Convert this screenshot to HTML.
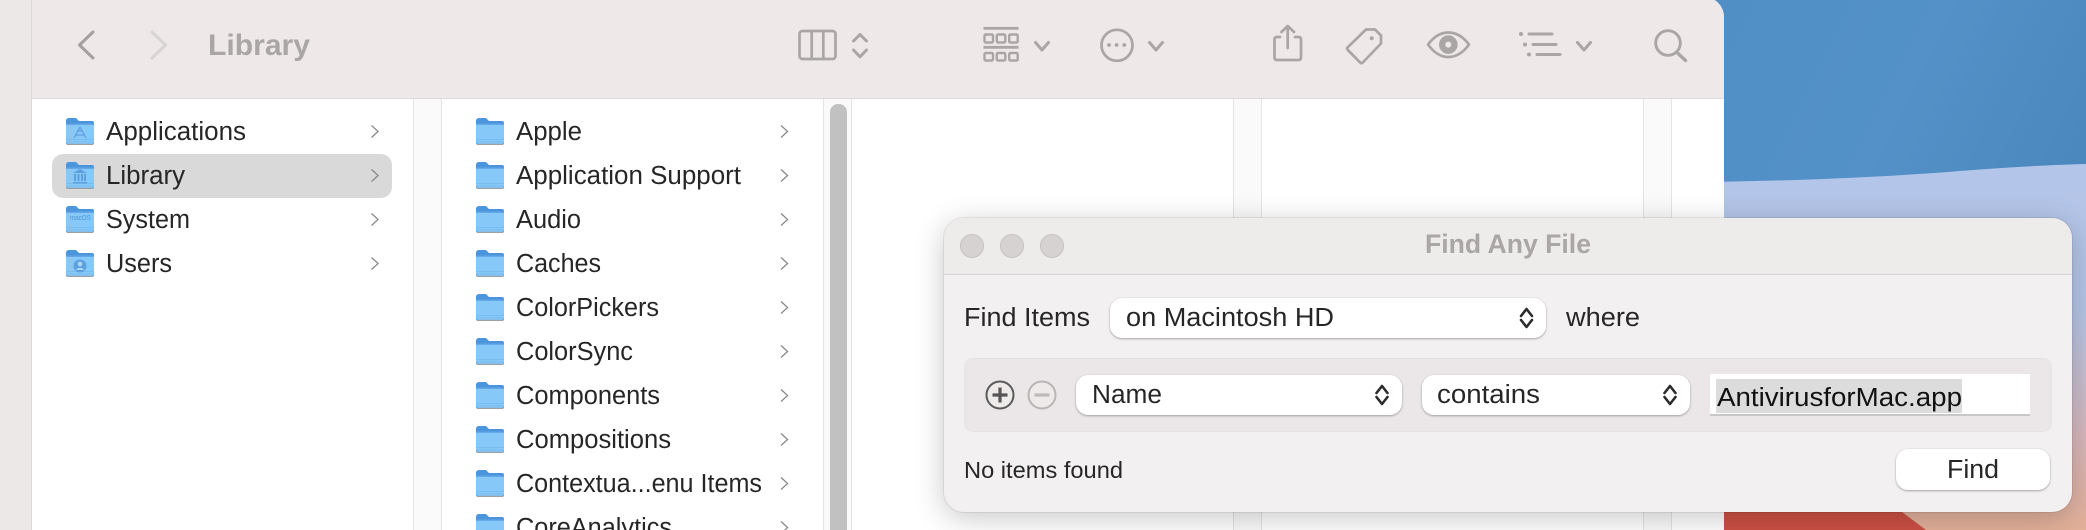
<!DOCTYPE html>
<html><head><meta charset="utf-8"><title>Find Any File</title>
<style>
html,body{margin:0;padding:0;width:2086px;height:530px;overflow:hidden;background:#ede8e8}
body{position:relative;font-family:"Liberation Sans",sans-serif}
.a{position:absolute}
#win{left:32px;top:-3px;width:1692px;height:533px;background:#fff;border-radius:0 20px 0 0;overflow:hidden;box-shadow:-1px 0 0 #dcd8d8}
#tb{left:0;top:0;width:1692px;height:101px;background:#eee8e8;border-bottom:1px solid #dedada}
.st{height:431px;background:#fafafa;border-left:1.5px solid #e4e4e4;border-right:1.5px solid #e4e4e4;box-sizing:border-box;width:29px}
#sel{left:52px;top:154px;width:340px;height:44px;background:#d9d9d9;border-radius:11px}
#thumb{left:830px;top:104px;width:17px;height:426px;background:#c1c1c1;border-radius:8px 8px 0 0}
#dlg{left:944px;top:218px;width:1128px;height:294px;background:#f3f0f1;border-radius:20px;box-shadow:0 6px 30px rgba(0,0,0,.22),0 0 0 1px rgba(0,0,0,.07)}
#dt{left:0;top:0;width:1128px;height:56px;background:#eeebeb;border-bottom:1.5px solid #d6d3d3;border-radius:20px 20px 0 0}
.tl{top:16px;width:24px;height:24px;border-radius:50%;background:#d6d2d1;box-sizing:border-box;border:1px solid #c6c2c1}
#row{left:20px;top:140px;width:1088px;height:74px;background:#ebe7e8;border:1px solid #e6e3e3;border-radius:9px;box-sizing:border-box}
.p{background:#fff;border-radius:12px;box-shadow:0 1px 2px rgba(0,0,0,.3),0 0 1px rgba(0,0,0,.15)}
#fld{left:766px;top:156px;width:320px;height:42px;background:#fff;border-bottom:2px solid #c8c8c8;box-sizing:border-box}
#hl{left:772px;top:161px;width:246px;height:34px;background:#dcdcdc}
svg{position:absolute;left:0;top:0}
text{fill:#262626;font-family:"Liberation Sans",sans-serif;font-size:25.5px}
.b{font-weight:700;fill:#aaa6a6}
.ti{fill:none;stroke:#aba6a6;stroke-width:2.7;stroke-linecap:round;stroke-linejoin:round}
.ch{fill:none;stroke:#858585;stroke-width:1.2}
.sp{fill:none;stroke:#2c2c2c;stroke-width:2.6;stroke-linecap:round;stroke-linejoin:round}
.g{fill:none;stroke:#5da0de;stroke-width:1.3}
</style></head><body>

<svg class="a" width="2086" height="530" viewBox="0 0 2086 530" style="left:0;top:0">
<defs>
<linearGradient id="lo" x1="0" y1="165" x2="0" y2="530" gradientUnits="userSpaceOnUse"><stop offset="0" stop-color="#b3c5e9"/><stop offset=".4" stop-color="#b5c5e6"/><stop offset=".75" stop-color="#d8b8bc"/><stop offset="1" stop-color="#e3b098"/></linearGradient>
<linearGradient id="bl" x1="1724" y1="0" x2="2086" y2="180" gradientUnits="userSpaceOnUse"><stop offset="0" stop-color="#4f8fc6"/><stop offset=".5" stop-color="#5391c8"/><stop offset="1" stop-color="#4a87bc"/></linearGradient>
</defs>
<rect x="1700" y="0" width="386" height="530" fill="url(#bl)"/>
<path d="M1700 182C1800 181 1900 176 1960 171C2010 167 2050 165 2086 164V530H1700Z" fill="url(#lo)"/>
<path d="M1700 420L1830 450L1902 512L1926 530H1700Z" fill="#cc5044"/>
</svg>

<div class="a" id="win">
<div class="a" id="tb"></div>
</div>
<div class="a st" style="left:413px;top:99px"></div>
<div class="a st" style="left:822.5px;top:99px"></div>
<div class="a st" style="left:1232.5px;top:99px"></div>
<div class="a st" style="left:1642.5px;top:99px"></div>
<div class="a" id="sel"></div>
<div class="a" id="thumb"></div>

<svg class="a" width="2086" height="530" viewBox="0 0 2086 530">
<defs>
<linearGradient id="ft" x1="0" y1="0" x2="0" y2="1"><stop offset="0" stop-color="#4d97de"/><stop offset="1" stop-color="#3f88d3"/></linearGradient>
<g id="f">
<path d="M0 26V3Q0 0 3 0H10L13 3H26Q28 3 28 5V26Z" fill="url(#ft)"/>
<path d="M0 7Q0 5.5 1.5 5.5H26.5Q28 5.5 28 7V24Q28 26 26 26H2Q0 26 0 24Z" fill="#86c9f8"/>
<rect x="0" y="5.5" width="28" height="1.5" fill="#62a8e6"/>
<rect x="0" y="21" width="28" height="1" fill="#78bcf0"/>
<rect x="0" y="23.5" width="28" height="1" fill="#78bcf0"/>
<rect x="0.5" y="25.7" width="27" height="1.3" rx=".6" fill="#9aa0a6"/>
</g>
<path id="c" d="M0 0L6.6 6L0 12"/>
<path id="s" d="M1.5 9L7 2L12.5 9M1.5 13L7 20L12.5 13"/>
<path id="dn" d="M1.5 1.5L8 9L14.5 1.5"/>
</defs>

<!-- toolbar -->
<path d="M93 32L79.5 45L93 58" fill="none" stroke="#a5a0a0" stroke-width="3" stroke-linecap="round" stroke-linejoin="round"/>
<path d="M152 32L165.5 45L152 58" fill="none" stroke="#d8d4d4" stroke-width="3" stroke-linecap="round" stroke-linejoin="round"/>
<text class="b" x="208" y="55" style="font-size:30px" textLength="102" lengthAdjust="spacingAndGlyphs">Library</text>

<g class="ti">
<rect x="799.5" y="31" width="36" height="28" rx="3"/><path d="M811.7 31V59M823.3 31V59"/>
<path d="M853.5 41L860 34.5L866.5 41M853.5 50L860 56.8L866.5 50" stroke-width="3"/>
<path d="M983.5 28.3H1018.5M983.5 47.3H1018.5" stroke-linecap="butt" stroke-width="2.8"/>
<g stroke-width="2.4">
<rect x="984.5" y="34.5" width="8.5" height="8" rx="1.2"/><rect x="996.8" y="34.5" width="8.5" height="8" rx="1.2"/><rect x="1009.2" y="34.5" width="8.5" height="8" rx="1.2"/>
<rect x="984.5" y="53" width="8.5" height="7.5" rx="1.2"/><rect x="996.8" y="53" width="8.5" height="7.5" rx="1.2"/><rect x="1009.2" y="53" width="8.5" height="7.5" rx="1.2"/>
</g>
<use href="#dn" x="1034" y="41" stroke-width="3"/>
<circle cx="1117" cy="45.3" r="15.5"/>
<use href="#dn" x="1148" y="41" stroke-width="3"/>
<path d="M1280 37H1277Q1274.5 37 1274.5 39.5V57.5Q1274.5 60 1277 60H1298.5Q1301 60 1301 57.5V39.5Q1301 37 1298.5 37H1295"/>
<path d="M1287.7 48V26.5M1281.5 32L1287.7 26L1294 32"/>
<path d="M1366 29.5H1375L1381 35.5V43.5L1362.8 62.5Q1361.5 63.8 1360.2 62.5L1347.8 50Q1346.5 48.5 1347.8 47.2Z"/>
<path d="M1428 44.5Q1437 32.5 1448.3 32.5Q1460 32.5 1469 44.5Q1460 57 1448.3 57Q1437 57 1428 44.5Z"/>
<path d="M1529 34H1552M1533 44.5H1556M1537 54.5H1560" stroke-width="3"/>
<use href="#dn" x="1576" y="41" stroke-width="3"/>
<circle cx="1668" cy="43" r="12.3" stroke-width="2.9"/><path d="M1677 52.5L1685.5 60.5" stroke-width="3.4"/>
</g>
<circle cx="1448.3" cy="44.6" r="9.3" fill="#aba6a6"/><circle cx="1448.3" cy="44.6" r="3" fill="#eee8e8"/>
<g fill="#aba6a6">
<circle cx="1371.7" cy="38.3" r="2"/>
<circle cx="1109" cy="45" r="1.9"/><circle cx="1116.6" cy="45" r="1.9"/><circle cx="1124.3" cy="45" r="1.9"/>
<circle cx="1521" cy="34" r="2"/><circle cx="1525" cy="44.5" r="2"/><circle cx="1529" cy="54.5" r="2"/>
</g>

<!-- column 1 -->
<use href="#f" x="66" y="118"/><use href="#f" x="66" y="162"/><use href="#f" x="66" y="206"/><use href="#f" x="66" y="250"/>
<path class="g" d="M80 127L74 138M80 127L86 138M75 135H85M78 131H82" />
<g fill="#5da0de"><path d="M80 169L87 173H73Z"/><rect x="74" y="174" width="2" height="7"/><rect x="77.5" y="174" width="2" height="7"/><rect x="81" y="174" width="2" height="7"/><rect x="84" y="174" width="2" height="7"/><rect x="73" y="182" width="14" height="1.5"/></g>
<text x="70" y="220" style="font-size:7.5px;fill:#4f95d8" textLength="21" lengthAdjust="spacingAndGlyphs">macOS</text>
<circle cx="80" cy="266" r="6.5" fill="#5da0de"/><circle cx="80" cy="264" r="2.3" fill="#a9d8f8"/><path d="M75.5 270Q80 265.5 84.5 270Z" fill="#a9d8f8"/>
<text x="106" y="140" textLength="140" lengthAdjust="spacingAndGlyphs">Applications</text>
<text x="106" y="184" textLength="79" lengthAdjust="spacingAndGlyphs">Library</text>
<text x="106" y="228" textLength="84" lengthAdjust="spacingAndGlyphs">System</text>
<text x="106" y="272" textLength="66" lengthAdjust="spacingAndGlyphs">Users</text>
<g class="ch">
<use href="#c" x="371.5" y="125.5"/><use href="#c" x="371.5" y="169.5"/><use href="#c" x="371.5" y="213.5"/><use href="#c" x="371.5" y="257.5"/>
</g>

<!-- column 2 -->
<use href="#f" x="476" y="118"/><use href="#f" x="476" y="162"/><use href="#f" x="476" y="206"/><use href="#f" x="476" y="250"/><use href="#f" x="476" y="294"/><use href="#f" x="476" y="338"/><use href="#f" x="476" y="382"/><use href="#f" x="476" y="426"/><use href="#f" x="476" y="470"/><use href="#f" x="476" y="514"/>
<text x="516" y="140" textLength="66" lengthAdjust="spacingAndGlyphs">Apple</text>
<text x="516" y="184" textLength="225" lengthAdjust="spacingAndGlyphs">Application Support</text>
<text x="516" y="228" textLength="65" lengthAdjust="spacingAndGlyphs">Audio</text>
<text x="516" y="272" textLength="85" lengthAdjust="spacingAndGlyphs">Caches</text>
<text x="516" y="316" textLength="143" lengthAdjust="spacingAndGlyphs">ColorPickers</text>
<text x="516" y="360" textLength="117" lengthAdjust="spacingAndGlyphs">ColorSync</text>
<text x="516" y="404" textLength="144" lengthAdjust="spacingAndGlyphs">Components</text>
<text x="516" y="448" textLength="155" lengthAdjust="spacingAndGlyphs">Compositions</text>
<text x="516" y="492" textLength="246" lengthAdjust="spacingAndGlyphs">Contextua...enu Items</text>
<text x="516" y="536" textLength="156" lengthAdjust="spacingAndGlyphs">CoreAnalytics</text>
<g class="ch">
<use href="#c" x="781" y="125.5"/><use href="#c" x="781" y="169.5"/><use href="#c" x="781" y="213.5"/><use href="#c" x="781" y="257.5"/><use href="#c" x="781" y="301.5"/><use href="#c" x="781" y="345.5"/><use href="#c" x="781" y="389.5"/><use href="#c" x="781" y="433.5"/><use href="#c" x="781" y="477.5"/><use href="#c" x="781" y="521.5"/>
</g>
</svg>

<div class="a" id="dlg">
<div class="a" id="dt"></div>
<div class="a tl" style="left:16px"></div><div class="a tl" style="left:56px"></div><div class="a tl" style="left:96px"></div>
<div class="a p" style="left:166px;top:80px;width:436px;height:40px"></div>
<div class="a" id="row"></div>
<div class="a p" style="left:132px;top:157px;width:326px;height:40px"></div>
<div class="a p" style="left:478px;top:157px;width:268px;height:40px"></div>
<div class="a" id="fld"></div>
<div class="a" id="hl"></div>
<div class="a p" style="left:952px;top:231px;width:154px;height:41px"></div>
</div>

<svg class="a" width="2086" height="530" viewBox="0 0 2086 530">
<text class="b" x="1425" y="253" style="font-size:26.5px" textLength="166" lengthAdjust="spacingAndGlyphs">Find Any File</text>
<text x="964" y="326" textLength="126" lengthAdjust="spacingAndGlyphs">Find Items</text>
<text x="1126" y="326" textLength="208" lengthAdjust="spacingAndGlyphs">on Macintosh HD</text>
<text x="1566" y="326" textLength="74" lengthAdjust="spacingAndGlyphs">where</text>
<text x="1092" y="403" textLength="70" lengthAdjust="spacingAndGlyphs">Name</text>
<text x="1437" y="403" textLength="103" lengthAdjust="spacingAndGlyphs">contains</text>
<text x="1717" y="406" style="fill:#111" textLength="245" lengthAdjust="spacingAndGlyphs">AntivirusforMac.app</text>
<text x="964" y="478" style="font-size:23px" textLength="159" lengthAdjust="spacingAndGlyphs">No items found</text>
<text x="1947" y="478" textLength="52" lengthAdjust="spacingAndGlyphs">Find</text>
<g class="sp"><use href="#s" x="1519.5" y="307"/><use href="#s" x="1375" y="384"/><use href="#s" x="1663" y="384"/></g>
<circle cx="1000" cy="395" r="13.5" fill="#eeeaea" stroke="#5a5a5a" stroke-width="2"/>
<path d="M1000 387.5V402.5M992.5 395H1007.5" stroke="#555" stroke-width="3.2" fill="none"/>
<circle cx="1042" cy="395" r="13.5" fill="#eeeaea" stroke="#b8b5b5" stroke-width="2"/>
<path d="M1034.5 395H1049.5" stroke="#bdbaba" stroke-width="3.2" fill="none"/>
</svg>
</body></html>
